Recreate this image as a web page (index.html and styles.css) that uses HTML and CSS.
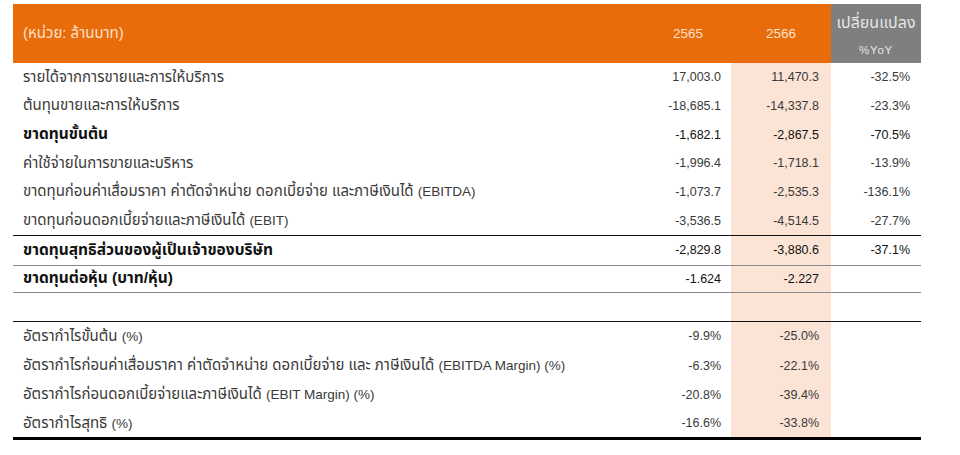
FILE: index.html
```html
<!DOCTYPE html>
<html lang="th">
<head>
<meta charset="utf-8">
<link rel="stylesheet" href="styles.css">
</head>
<body>
<div class="table">
  <div class="row head">
    <div class="cell label">(หน่วย: ล้านบาท)</div>
    <div class="cell num yr1">2565</div>
    <div class="cell num center">2566</div>
    <div class="cell yoy-head"><span>เปลี่ยนแปลง</span><span class="yoy-sub">%YoY</span></div>
  </div>

  <div class="row r1">
    <div class="cell label">รายได้จากการขายและการให้บริการ</div>
    <div class="cell num">17,003.0</div>
    <div class="cell num hl">11,470.3</div>
    <div class="cell num pct">-32.5%</div>
  </div>
  <div class="row r1">
    <div class="cell label">ต้นทุนขายและการให้บริการ</div>
    <div class="cell num">-18,685.1</div>
    <div class="cell num hl">-14,337.8</div>
    <div class="cell num pct">-23.3%</div>
  </div>
  <div class="row r1 strong">
    <div class="cell label">ขาดทุนขั้นต้น</div>
    <div class="cell num">-1,682.1</div>
    <div class="cell num hl">-2,867.5</div>
    <div class="cell num pct">-70.5%</div>
  </div>
  <div class="row r1">
    <div class="cell label">ค่าใช้จ่ายในการขายและบริหาร</div>
    <div class="cell num">-1,996.4</div>
    <div class="cell num hl">-1,718.1</div>
    <div class="cell num pct">-13.9%</div>
  </div>
  <div class="row r1">
    <div class="cell label">ขาดทุนก่อนค่าเสื่อมราคา ค่าตัดจำหน่าย ดอกเบี้ยจ่าย และภาษีเงินได้&nbsp;<span class="lat">(EBITDA)</span></div>
    <div class="cell num">-1,073.7</div>
    <div class="cell num hl">-2,535.3</div>
    <div class="cell num pct">-136.1%</div>
  </div>
  <div class="row r1">
    <div class="cell label">ขาดทุนก่อนดอกเบี้ยจ่ายและภาษีเงินได้&nbsp;<span class="lat">(EBIT)</span></div>
    <div class="cell num">-3,536.5</div>
    <div class="cell num hl">-4,514.5</div>
    <div class="cell num pct">-27.7%</div>
  </div>

  <div class="row r-net strong">
    <div class="cell label">ขาดทุนสุทธิส่วนของผู้เป็นเจ้าของบริษัท</div>
    <div class="cell num">-2,829.8</div>
    <div class="cell num hl">-3,880.6</div>
    <div class="cell num pct">-37.1%</div>
  </div>
  <div class="row r-eps strong">
    <div class="cell label">ขาดทุนต่อหุ้น (บาท/หุ้น)</div>
    <div class="cell num">-1.624</div>
    <div class="cell num hl">-2.227</div>
    <div class="cell num pct"></div>
  </div>
  <div class="row r-empty">
    <div class="cell label"></div>
    <div class="cell num"></div>
    <div class="cell num hl"></div>
    <div class="cell num pct"></div>
  </div>

  <div class="row r2 first">
    <div class="cell label">อัตรากำไรขั้นต้น&nbsp;<span class="lat">(%)</span></div>
    <div class="cell num">-9.9%</div>
    <div class="cell num hl">-25.0%</div>
    <div class="cell num pct"></div>
  </div>
  <div class="row r2">
    <div class="cell label">อัตรากำไรก่อนค่าเสื่อมราคา ค่าตัดจำหน่าย ดอกเบี้ยจ่าย และ ภาษีเงินได้&nbsp;<span class="lat">(EBITDA Margin) (%)</span></div>
    <div class="cell num">-6.3%</div>
    <div class="cell num hl">-22.1%</div>
    <div class="cell num pct"></div>
  </div>
  <div class="row r2">
    <div class="cell label">อัตรากำไรก่อนดอกเบี้ยจ่ายและภาษีเงินได้&nbsp;<span class="lat">(EBIT Margin) (%)</span></div>
    <div class="cell num">-20.8%</div>
    <div class="cell num hl">-39.4%</div>
    <div class="cell num pct"></div>
  </div>
  <div class="row r2 last">
    <div class="cell label">อัตรากำไรสุทธิ&nbsp;<span class="lat">(%)</span></div>
    <div class="cell num">-16.6%</div>
    <div class="cell num hl">-33.8%</div>
    <div class="cell num pct"></div>
  </div>
</div>
</body>
</html>
```

FILE: styles.css
```css
html, body {
  margin: 0;
  padding: 0;
  background: #ffffff;
}

body {
  font-family: "Liberation Sans", Arial, "Noto Sans Thai", "Noto Sans", sans-serif;
  font-size: 12.5px;
  color: #3a3a3a;
}

.table {
  margin: 4px 0 0 13px;
  width: 908px;
}

.row {
  display: grid;
  grid-template-columns: 618px 100px 100px 90px;
  box-sizing: border-box;
}

.cell {
  display: flex;
  align-items: center;
  white-space: nowrap;
}

.label {
  padding-left: 10px;
  font-size: 15px;
}

.lat {
  font-size: 13.5px;
}

.num {
  justify-content: flex-end;
  padding-right: 10px;
}

.hl {
  background: #fbe4d5;
  padding-right: 12px;
}

.pct {
  padding-right: 11px;
}

.center {
  justify-content: center;
  padding-right: 0;
}

/* header */
.head {
  height: 59px;
}

.head .cell {
  background: #e86c0a;
  color: #fde0ca;
  font-size: 13.5px;
}

.head .label {
  font-size: 15px;
}

.head .yr1 {
  padding-right: 28px;
}

.head .yoy-head {
  background: #7f7f7f;
  color: #e6e6e6;
  flex-direction: column;
  justify-content: center;
  align-items: center;
  gap: 9px;
  font-size: 16px;
}

.head .yoy-sub {
  font-size: 11.5px;
  letter-spacing: 0.8px;
}

/* body rows */
.r1 {
  height: 28.67px;
}

.strong {
  color: #111111;
}

.strong .label {
  font-weight: bold;
  font-size: 15.5px;
}

.r-net {
  height: 30px;
  border-top: 1px solid #111111;
}

.r-eps {
  height: 27px;
  border-top: 1px solid #8a8a8a;
}

.r-empty {
  height: 29px;
  border-top: 1px solid #8a8a8a;
}

.r2 {
  height: 29.25px;
}

.r2.first {
  border-top: 1px solid #111111;
  height: 30px;
}

.r2.last {
  height: 31px;
  border-bottom: 3px solid #000000;
}
```
